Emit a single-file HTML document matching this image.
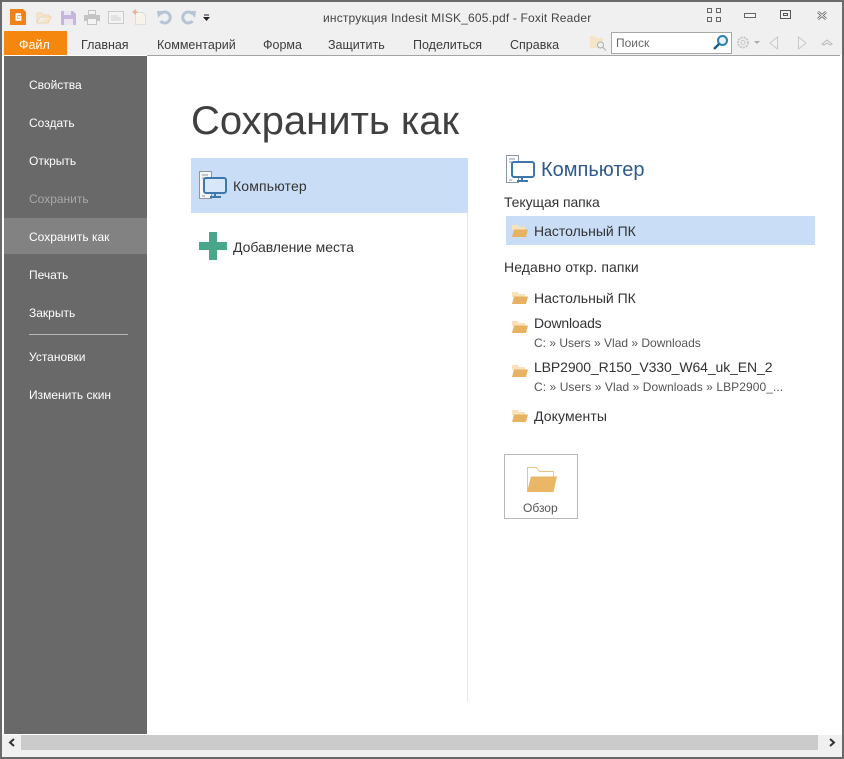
<!DOCTYPE html>
<html><head><meta charset="utf-8">
<style>
html,body{margin:0;padding:0;width:844px;height:759px;overflow:hidden;background:#fff}
body{position:relative;font-family:"Liberation Sans",sans-serif;color:#3c3c3c}
.a{position:absolute}
.t{position:absolute;white-space:nowrap;line-height:16px;font-size:12.5px}
.m{color:#fff;font-size:12px;left:29px}
svg{position:absolute;overflow:visible}
</style></head><body>
<div class="a" style="left:0;top:0;width:844px;height:759px;background:#fff"></div>
<div class="a" style="left:0;top:0;width:844px;height:55px;background:#f0f0f0"></div>
<div class="a" style="left:0;top:0;width:844px;height:2px;background:#6a6a6a"></div>
<div class="a" style="left:0;top:0;width:2px;height:759px;background:#6a6a6a"></div>
<div class="a" style="left:842px;top:0;width:2px;height:759px;background:#6a6a6a"></div>
<div class="a" style="left:0;top:757px;width:844px;height:2px;background:#6a6a6a"></div>
<div class="a" style="left:147px;top:55px;width:693px;height:1px;background:#a4a4a4"></div>

<!-- toolbar icons -->
<svg style="left:10px;top:9px" width="16" height="16"><rect width="16" height="16" fill="#f0821a"/><path d="M11 5.200H6.500v5.600H10.500V8H8" fill="none" stroke="#fff" stroke-width="2"/><path d="M13 0h3v3z" fill="#f8e8d8"/></svg>
<svg style="left:36px;top:10px" width="16" height="15"><path d="M1 13V3h5l1 2h6v2H4l-3 6h11l3-6h-2" fill="#f8e6cc" stroke="#ecd6b4"/></svg>
<svg style="left:61px;top:11px" width="15" height="14"><path d="M0 0h12l3 3v11H0z" fill="#c6b6dc"/><rect x="3" y="0" width="7" height="4" fill="#ebe6f2"/><rect x="3" y="8" width="9" height="6" fill="#ebe6f2"/></svg>
<svg style="left:84px;top:10px" width="16" height="15"><rect x="4.500" y=".5" width="7" height="4" fill="#f4f4f4" stroke="#c4c4c4"/><rect x="0" y="5" width="16" height="6" fill="#c4c4c4"/><rect x="3.500" y="8.500" width="9" height="6" fill="#f4f4f4" stroke="#c4c4c4"/></svg>
<svg style="left:108px;top:11px" width="16" height="13"><rect x=".5" y=".5" width="15" height="12" fill="#f4f4f4" stroke="#cacaca"/><path d="M3 5h7M3 7h10M3 9h10" stroke="#d0d0d0"/></svg>
<svg style="left:132px;top:9px" width="15" height="16"><path d="M3.500 3.500h7l3 3v9h-10z" fill="#f8f3ea" stroke="#dedede"/><path d="M3 .5v5M.5 3h5" stroke="#efa596" stroke-width="1.500"/></svg>
<svg style="left:157px;top:10px" width="16" height="15"><path d="M3.500 4a5.500 5.500 0 1 1 0 7" fill="none" stroke="#b6c5d6" stroke-width="3"/><path d="M0 1h7L1 8z" fill="#b6c5d6"/></svg>
<svg style="left:180px;top:10px" width="16" height="15"><path d="M12.500 4a5.500 5.500 0 1 0 0 7" fill="none" stroke="#b6c5d6" stroke-width="3"/><path d="M16 1H9l6 7z" fill="#b6c5d6"/></svg>
<svg style="left:203px;top:14px" width="7" height="8"><path d="M1 1h5" stroke="#222"/><path d="M0 3h7l-3.500 4z" fill="#222"/></svg>

<div class="t" style="left:323px;top:10px;font-size:12px;letter-spacing:.18px;color:#444">инструкция Indesit MISK_605.pdf - Foxit Reader</div>

<!-- window buttons -->
<svg style="left:707px;top:8px" width="14" height="14"><g fill="none" stroke="#666"><rect x=".5" y=".5" width="4" height="4"/><rect x="9.500" y=".5" width="4" height="4"/><rect x=".5" y="9.500" width="4" height="4"/><rect x="9.500" y="9.500" width="4" height="4"/></g></svg>
<svg style="left:744px;top:13px" width="12" height="5"><rect x=".5" y=".5" width="11" height="4" fill="#f4f4f4" stroke="#666"/></svg>
<svg style="left:780px;top:10px" width="11" height="9"><rect x=".5" y=".5" width="10" height="8" fill="none" stroke="#555"/><rect x="3.500" y="3.500" width="4" height="2" fill="none" stroke="#555"/></svg>
<svg style="left:816px;top:10px" width="12" height="11"><path d="M2 2l8 7M10 2l-8 7" stroke="#666" stroke-width="2.600"/><path d="M2 2l8 7M10 2l-8 7" stroke="#f4f4f4" stroke-width="1"/></svg>

<!-- ribbon tabs -->
<div class="a" style="left:4px;top:31px;width:63px;height:24px;background:#f5870f"></div>
<div class="t" style="left:19px;top:37px;color:#fff">Файл</div>
<div class="t" style="left:81px;top:37px">Главная</div>
<div class="t" style="left:157px;top:37px">Комментарий</div>
<div class="t" style="left:263px;top:37px">Форма</div>
<div class="t" style="left:328px;top:37px">Защитить</div>
<div class="t" style="left:413px;top:37px">Поделиться</div>
<div class="t" style="left:510px;top:37px">Справка</div>

<svg style="left:589px;top:34px" width="18" height="17"><path d="M1 14V2h5l2 2h6v10z" fill="#f4e4c8"/><circle cx="11.500" cy="11" r="3" fill="#f0f0f0" stroke="#a4b0b4"/><path d="M14 13.500l3 3" stroke="#a4b0b4"/></svg>
<div class="a" style="left:611px;top:32px;width:119px;height:20px;background:#fff;border:1px solid #a8a8a8"></div>
<div class="t" style="left:616px;top:35px;font-size:12px;color:#666">Поиск</div>
<svg style="left:712px;top:34px" width="18" height="17"><circle cx="10.500" cy="6.500" r="4.500" fill="#e6f3fa" stroke="#2a7fb0" stroke-width="2"/><path d="M7 10l-5 5" stroke="#1d5f88" stroke-width="2.500"/></svg>
<svg style="left:736px;top:35px" width="26" height="15"><circle cx="7" cy="7.500" r="5" fill="none" stroke="#c8c8c8" stroke-width="2" stroke-dasharray="2 1"/><circle cx="7" cy="7.500" r="2" fill="none" stroke="#c8c8c8"/><path d="M18 6h6l-3 3z" fill="#aaa"/></svg>
<svg style="left:769px;top:36px" width="10" height="14"><path d="M8.500 1v12L1 7z" fill="#f2f2f2" stroke="#c8c8c8"/></svg>
<svg style="left:797px;top:36px" width="10" height="14"><path d="M1.500 1v12L9 7z" fill="#f2f2f2" stroke="#c8c8c8"/></svg>
<svg style="left:821px;top:38px" width="12" height="9"><path d="M1 6l5-4 5 4-2 1-3-2-3 2z" fill="#f2f2f2" stroke="#b8b8b8"/></svg>

<!-- sidebar -->
<div class="a" style="left:4px;top:56px;width:143px;height:678px;background:#696969"></div>
<div class="a" style="left:4px;top:218px;width:143px;height:36px;background:#828282"></div>
<div class="t m" style="top:77px">Свойства</div>
<div class="t m" style="top:115px">Создать</div>
<div class="t m" style="top:153px">Открыть</div>
<div class="t m" style="top:191px;color:#a8a8a8">Сохранить</div>
<div class="t m" style="top:229px">Сохранить как</div>
<div class="t m" style="top:267px">Печать</div>
<div class="t m" style="top:305px">Закрыть</div>
<div class="a" style="left:29px;top:334px;width:99px;height:1px;background:#b8b8b8"></div>
<div class="t m" style="top:349px">Установки</div>
<div class="t m" style="top:387px">Изменить скин</div>

<!-- heading -->
<div class="t" style="left:191px;top:98px;font-size:40px;line-height:46px;color:#404040">Сохранить как</div>

<!-- left pane -->
<div class="a" style="left:191px;top:158px;width:277px;height:55px;background:#c9ddf6"></div>
<div class="a" style="left:467px;top:213px;width:1px;height:489px;background:#e8e8e8"></div>
<svg style="left:199px;top:170px" width="30" height="30"><path d="M.5 1.500h12v27H.5z" fill="#f6f6f6" stroke="#8a98a4"/><path d="M3 5h6M3 8h8M3 26h3" stroke="#8a98a4"/><rect x="5" y="8" width="22" height="15" rx="2" fill="#d8e8fa" stroke="#3d78ad" stroke-width="2"/><path d="M16 23v3M11 27h11" stroke="#3d78ad" stroke-width="2"/></svg>
<div class="t" style="left:233px;top:178px;font-size:14px;letter-spacing:.15px;color:#333">Компьютер</div>
<svg style="left:199px;top:232px" width="28" height="28"><path d="M10 0h8v10h10v8H18v10h-8V18H0v-8h10z" fill="#4aa68a"/></svg>
<div class="t" style="left:233px;top:239px;font-size:14px;letter-spacing:-.05px;color:#333">Добавление места</div>

<!-- right pane -->
<svg style="left:506px;top:155px" width="30" height="28"><path d="M.5 .5h12v27H.5z" fill="#fff" stroke="#8a98a4"/><path d="M3 4h6M3 7h8M3 25h3" stroke="#8a98a4"/><rect x="6" y="7" width="22" height="15" rx="2" fill="#fff" stroke="#3d78ad" stroke-width="2"/><path d="M16 22v3M11 26h11" stroke="#3d78ad" stroke-width="2"/></svg>
<div class="t" style="left:541px;top:159px;font-size:20px;line-height:22px;color:#2f5a8c">Компьютер</div>
<div class="t" style="left:504px;top:194px;font-size:14px;letter-spacing:-.08px;color:#333">Текущая папка</div>
<div class="a" style="left:506px;top:216px;width:309px;height:29px;background:#c9ddf6"></div>
<div class="t" style="left:534px;top:223px;font-size:14px;color:#333">Настольный ПК</div>
<div class="t" style="left:504px;top:259px;font-size:14px;letter-spacing:.1px;color:#333">Недавно откр. папки</div>
<div class="t" style="left:534px;top:290px;font-size:14px;color:#333">Настольный ПК</div>
<div class="t" style="left:534px;top:315px;font-size:14px;letter-spacing:-.2px;color:#333">Downloads</div>
<div class="t" style="left:534px;top:335px;font-size:12px;color:#555">C: » Users » Vlad » Downloads</div>
<div class="t" style="left:534px;top:359px;font-size:14px;letter-spacing:-.1px;color:#333">LBP2900_R150_V330_W64_uk_EN_2</div>
<div class="t" style="left:534px;top:379px;font-size:12px;letter-spacing:.07px;color:#555">C: » Users » Vlad » Downloads » LBP2900_...</div>
<div class="t" style="left:534px;top:408px;font-size:14px;letter-spacing:.1px;color:#333">Документы</div>

<svg style="left:512px;top:224px" width="16" height="13"><path d="M0 13V1h6l1 2h6v3H0z" fill="#f8e2bc" stroke="none"/><path d="M0 13l2-7.500h14L14 13z" fill="#e8b361"/></svg>
<svg style="left:512px;top:291px" width="16" height="13"><path d="M0 13V1h6l1 2h6v3H0z" fill="#f8e2bc"/><path d="M0 13l2-7.500h14L14 13z" fill="#e8b361"/></svg>
<svg style="left:512px;top:320px" width="16" height="13"><path d="M0 13V1h6l1 2h6v3H0z" fill="#f8e2bc"/><path d="M0 13l2-7.500h14L14 13z" fill="#e8b361"/></svg>
<svg style="left:512px;top:364px" width="16" height="13"><path d="M0 13V1h6l1 2h6v3H0z" fill="#f8e2bc"/><path d="M0 13l2-7.500h14L14 13z" fill="#e8b361"/></svg>
<svg style="left:512px;top:409px" width="16" height="13"><path d="M0 13V1h6l1 2h6v3H0z" fill="#f8e2bc"/><path d="M0 13l2-7.500h14L14 13z" fill="#e8b361"/></svg>

<div class="a" style="left:504px;top:454px;width:72px;height:63px;border:1px solid #b8b8b8"></div>
<svg style="left:527px;top:467px" width="30" height="25"><path d="M.5 25V.5h9l3 4h14v6" fill="#fff" stroke="#e8c48a"/><path d="M0 25L4 9.500h26L26.500 25z" fill="#e9b765"/></svg>
<div class="t" style="left:523px;top:500px;font-size:12px;color:#555">Обзор</div>

<!-- scrollbar -->
<div class="a" style="left:2px;top:735px;width:840px;height:22px;background:#f0f0f0"></div>
<div class="a" style="left:21px;top:735px;width:797px;height:15px;background:#cbcbcb"></div>
<svg style="left:8px;top:738px" width="8" height="9"><path d="M6 1L2 4.500 6 8" fill="none" stroke="#333" stroke-width="2"/></svg>
<svg style="left:828px;top:738px" width="8" height="9"><path d="M2 1l4 3.500L2 8" fill="none" stroke="#333" stroke-width="2"/></svg>
</body></html>
